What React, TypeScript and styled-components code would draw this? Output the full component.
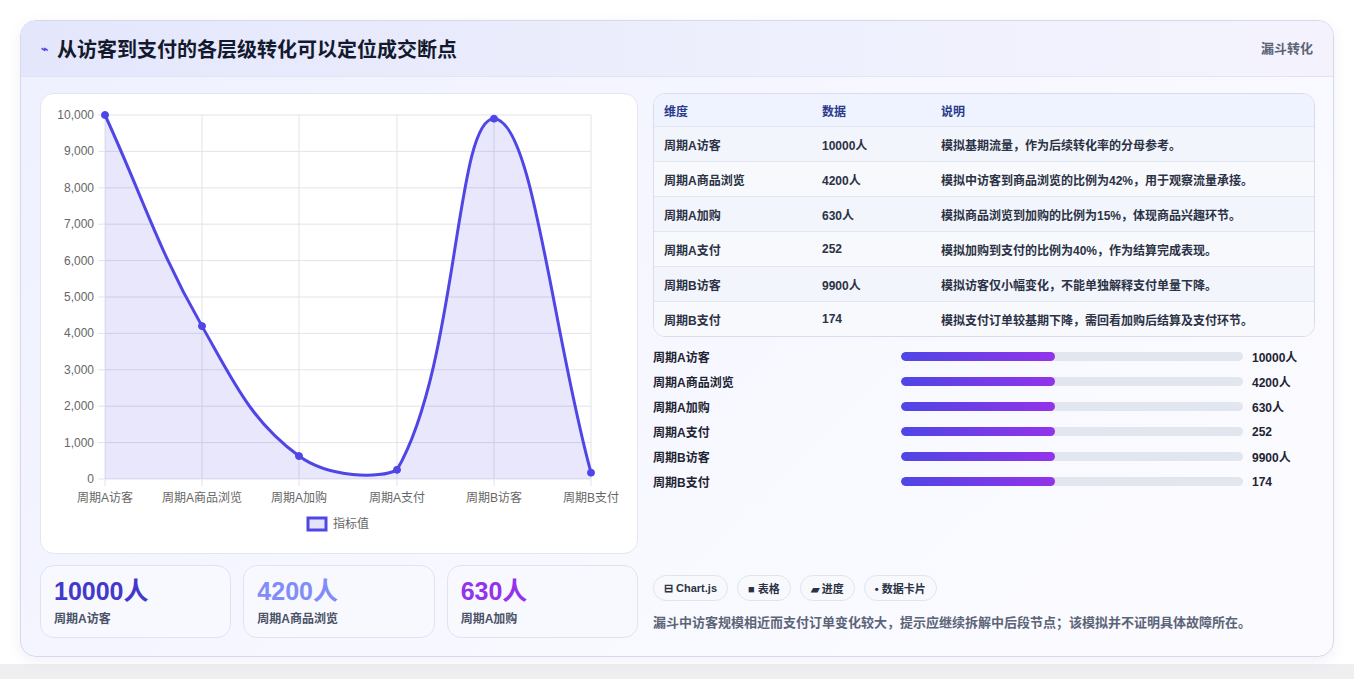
import React from "react";
import styled, { createGlobalStyle } from "styled-components";

const G = createGlobalStyle`
  html,body{margin:0;padding:0;background:#f1f1f4;}
  body{font-family:"Liberation Sans","Noto Sans CJK SC",sans-serif;}
`;
const Page = styled.div`padding:20px 20px 22px 20px;height:679px;box-sizing:border-box;
  background:linear-gradient(#fff 0,#fff 664px,#efeff2 664px);`;
const Card = styled.div`border:1px solid #d5d8ef;border-radius:16px;overflow:hidden;height:637px;box-sizing:border-box;
  background:linear-gradient(135deg,#eef0ff,#f8f9ff 60%,#fbfbff);box-shadow:0 4px 14px rgba(80,80,140,.08);`;
const Header = styled.div`height:55px;display:flex;align-items:center;justify-content:space-between;padding:0 20px 0 20px;
  background:linear-gradient(90deg,#e4e6fc,#eef0fd 60%,#f4f3fd);border-bottom:1px solid #e2e4f4;`;
const Title = styled.h1`margin:0;font-size:20px;font-weight:700;color:#141a2e;display:flex;align-items:center;gap:9px;`;
const Tag = styled.span`font-size:13px;font-weight:700;color:#5c6478;align-self:flex-start;margin-top:17px;`;
const Body = styled.div`display:grid;grid-template-columns:598px 662px;gap:15px;padding:16px 19px 0 19px;`;
const Col = styled.div`display:flex;flex-direction:column;`;
const ChartBox = styled.div`height:461px;box-sizing:border-box;background:#fff;border:1px solid #e3e5f2;border-radius:14px;`;
const Stats = styled.div`display:grid;grid-template-columns:repeat(3,1fr);gap:12px;margin-top:11px;`;
const Stat = styled.div`height:73px;box-sizing:border-box;border:1px solid #e0e3f2;border-radius:14px;background:#f8f9ff;padding:9px 13px;`;
const StatNum = styled.div<{c:string}>`font-size:25px;font-weight:700;color:${p=>p.c};line-height:32px;`;
const StatLbl = styled.div`font-size:12px;color:#4a5266;font-weight:700;margin-top:2px;`;
const Table = styled.div`border:1px solid #d8dcec;border-radius:12px;overflow:hidden;background:#fff;`;
const Row = styled.div<{h?:boolean;alt?:boolean}>`display:grid;grid-template-columns:158px 119px 1fr;height:${p=>p.h?32:34}px;align-items:center;
  padding-left:10px;font-size:12px;font-weight:700;color:${p=>p.h?"#2a3a8a":"#2b3245"};
  background:${p=>p.h?"#eef3ff":p.alt?"#f8f9fc":"#f3f5fc"};border-top:${p=>p.h?"none":"1px solid #e2e6f0"};`;
const Bars = styled.div`display:flex;flex-direction:column;gap:9px;margin-top:11px;`;
const BarRow = styled.div`display:grid;grid-template-columns:248px 351px 1fr;align-items:center;height:16px;font-size:12px;font-weight:700;color:#1e2433;`;
const Track = styled.div`height:9px;border-radius:5px;background:#e2e6ef;margin-right:9px;overflow:hidden;`;
const Fill = styled.div`height:100%;border-radius:5px;background:linear-gradient(90deg,#4f46e5,#9333ea);`;
const Chips = styled.div`display:flex;gap:9px;margin-top:86px;`;
const Chip = styled.span`height:26px;box-sizing:border-box;padding:0 10px;border:1px solid #e1e4ee;border-radius:13px;background:#f8f9fc;
  display:inline-flex;align-items:center;gap:3px;font-size:11px;font-weight:700;color:#2b3245;`;
const Note = styled.p`margin:11px 0 0;font-size:13px;font-weight:700;color:#5c6478;`;

const xs=[105,202,299,397,494,591];
const vals=[10000,4200,630,252,9900,174];
const y=(v:number)=>479-v*0.0364;
function path(){
  const pts=vals.map((v,i)=>[xs[i],y(v)]);
  const t=0.4;
  const cps=pts.map((p,i)=>{
    const prev=pts[Math.max(0,i-1)],next=pts[Math.min(pts.length-1,i+1)];
    const d01=Math.hypot(p[0]-prev[0],p[1]-prev[1]),d12=Math.hypot(next[0]-p[0],next[1]-p[1]);
    let fa=d01/(d01+d12||1),fb=d12/(d01+d12||1);
    fa*=t;fb*=t;
    return {pr:[p[0]-fa*(next[0]-prev[0]),p[1]-fa*(next[1]-prev[1])],nx:[p[0]+fb*(next[0]-prev[0]),p[1]+fb*(next[1]-prev[1])]};
  });
  let d=`M${pts[0][0]},${pts[0][1]}`;
  for(let i=1;i<pts.length;i++){const a=cps[i-1].nx,b=cps[i].pr;d+=` C${a[0]},${Math.min(479,a[1])} ${b[0]},${Math.min(479,b[1])} ${pts[i][0]},${pts[i][1]}`;}
  return d;
}
const Chart=()=>{const d=path();const f="Liberation Sans,Noto Sans CJK SC,sans-serif";
  const labels=["周期A访客","周期A商品浏览","周期A加购","周期A支付","周期B访客","周期B支付"];
  return <svg width="596" height="459" viewBox="41 94 596 459">
    {Array.from({length:11},(_,i)=>{const yy=479-i*36.4;return <g key={i}><line x1={98} x2={591} y1={yy} y2={yy} stroke="#e3e3ea"/>
      <text x={94} y={yy+4} textAnchor="end" fontSize="12" fill="#666" fontFamily={f}>{(i*1000).toLocaleString("en-US")}</text></g>})}
    {xs.map((x,i)=><g key={i}><line x1={x} x2={x} y1={115} y2={486} stroke="#e3e3ea"/>
      <text x={x} y={502} textAnchor="middle" fontSize="12" fill="#666" fontFamily={f}>{labels[i]}</text></g>)}
    <path d={d+" L591,479 L105,479 Z"} fill="rgba(79,70,229,.13)"/>
    <path d={d} fill="none" stroke="#4f46e5" strokeWidth="3"/>
    {vals.map((v,i)=><circle key={i} cx={xs[i]} cy={y(v)} r="3.5" fill="#4f46e5" stroke="#4f46e5"/>)}
    <rect x={308} y={518} width={18} height={12} fill="rgba(79,70,229,.15)" stroke="#4f46e5" strokeWidth="3"/>
    <text x={333} y={528} fontSize="12" fill="#666" fontFamily={f}>指标值</text>
  </svg>};

const rows=[["周期A访客","10000人","模拟基期流量，作为后续转化率的分母参考。"],["周期A商品浏览","4200人","模拟中访客到商品浏览的比例为42%，用于观察流量承接。"],["周期A加购","630人","模拟商品浏览到加购的比例为15%，体现商品兴趣环节。"],["周期A支付","252","模拟加购到支付的比例为40%，作为结算完成表现。"],["周期B访客","9900人","模拟访客仅小幅变化，不能单独解释支付单量下降。"],["周期B支付","174","模拟支付订单较基期下降，需回看加购后结算及支付环节。"]];

export default function App(){return <><G/><Page><Card>
  <Header><Title><span style={{fontSize:12,color:"#4f46e5"}}>⌁</span>从访客到支付的各层级转化可以定位成交断点</Title><Tag>漏斗转化</Tag></Header>
  <Body>
    <Col><ChartBox><Chart/></ChartBox>
      <Stats>
        <Stat><StatNum c="#4338ca">10000人</StatNum><StatLbl>周期A访客</StatLbl></Stat>
        <Stat><StatNum c="#818cf8">4200人</StatNum><StatLbl>周期A商品浏览</StatLbl></Stat>
        <Stat><StatNum c="#9333ea">630人</StatNum><StatLbl>周期A加购</StatLbl></Stat>
      </Stats></Col>
    <Col>
      <Table><Row h><span>维度</span><span>数据</span><span>说明</span></Row>
        {rows.map((r,i)=><Row key={i} alt={i%2===1}><span>{r[0]}</span><span>{r[1]}</span><span>{r[2]}</span></Row>)}</Table>
      <Bars>{rows.map((r,i)=><BarRow key={i}><span>{r[0]}</span><Track><Fill style={{width:"45%"}}/></Track><span>{r[1]}</span></BarRow>)}</Bars>
      <Chips><Chip>⊟ Chart.js</Chip><Chip>■ 表格</Chip><Chip>▰ 进度</Chip><Chip>• 数据卡片</Chip></Chips>
      <Note>漏斗中访客规模相近而支付订单变化较大，提示应继续拆解中后段节点；该模拟并不证明具体故障所在。</Note>
    </Col>
  </Body>
</Card></Page></>}
